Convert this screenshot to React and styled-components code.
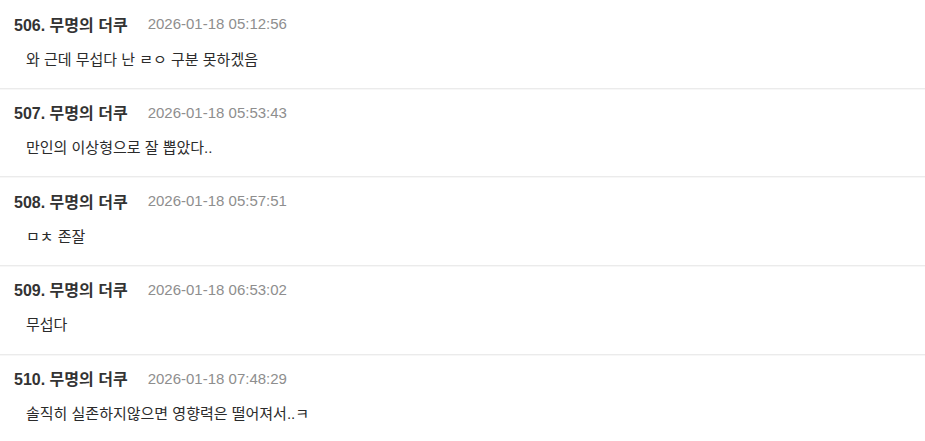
import React from 'react';
import styled, { createGlobalStyle } from 'styled-components';

const GlobalStyle = createGlobalStyle`
  html, body {
    margin: 0;
    padding: 0;
    background: #ffffff;
  }
  body {
    font-family: "Liberation Sans", "Noto Sans CJK KR", sans-serif;
    -webkit-font-smoothing: antialiased;
  }
`;

const List = styled.div`
  width: 925px;
  display: flex;
  flex-direction: column;
`;

const Comment = styled.div`
  display: flex;
  flex-direction: column;
  gap: 14px;
  padding: 12.5px 0 17.17px 14px;
  border-bottom: 1px solid ${props => (props.last ? 'transparent' : '#ebebeb')};
  box-shadow: ${props => (props.last ? 'none' : '0 1px 0 #f7f7f7')};
`;

const Header = styled.div`
  display: flex;
  align-items: center;
  height: 22px;
`;

const Author = styled.span`
  font-size: 16px;
  font-weight: 700;
  color: #333333;
  margin-right: 20px;
  white-space: nowrap;
`;

const DateText = styled.span`
  font-size: 15px;
  color: #8e8e8e;
  white-space: nowrap;
`;

const Body = styled.p`
  margin: 0 0 0 12px;
  height: 22px;
  line-height: 22px;
  font-size: 15px;
  color: #2b2b2b;
`;

const comments = [
  { no: 506, name: '무명의 더쿠', date: '2026-01-18 05:12:56', text: '와 근데 무섭다 난 ㄹㅇ 구분 못하겠음' },
  { no: 507, name: '무명의 더쿠', date: '2026-01-18 05:53:43', text: '만인의 이상형으로 잘 뽑았다..' },
  { no: 508, name: '무명의 더쿠', date: '2026-01-18 05:57:51', text: 'ㅁㅊ 존잘' },
  { no: 509, name: '무명의 더쿠', date: '2026-01-18 06:53:02', text: '무섭다' },
  { no: 510, name: '무명의 더쿠', date: '2026-01-18 07:48:29', text: '솔직히 실존하지않으면 영향력은 떨어져서..ㅋ' },
];

const App = () => {
  return (
    <>
      <GlobalStyle />
      <List>
        {comments.map((c, i) => (
          <Comment key={c.no} last={i === comments.length - 1}>
            <Header>
              <Author>{c.no}. {c.name}</Author>
              <DateText>{c.date}</DateText>
            </Header>
            <Body>{c.text}</Body>
          </Comment>
        ))}
      </List>
    </>
  );
};

export default App;
